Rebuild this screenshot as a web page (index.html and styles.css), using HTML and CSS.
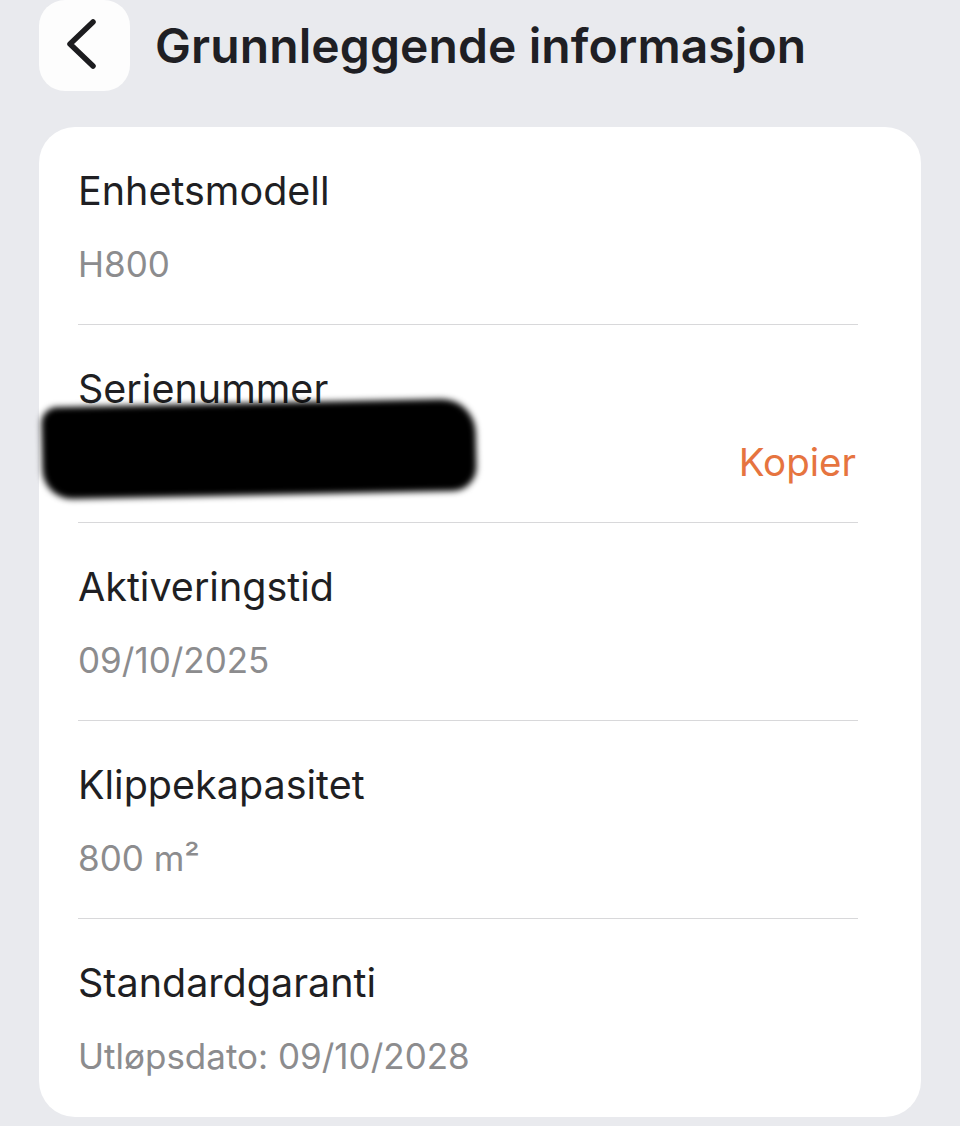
FILE: index.html
```html
<!DOCTYPE html>
<html lang="no">
<head>
  <meta charset="UTF-8">
  <title>Grunnleggende informasjon</title>
  <link rel="stylesheet" href="styles.css">
</head>
<body>
  <header class="topbar">
    <button class="back-btn" aria-label="Tilbake">
      <svg width="91" height="91" viewBox="0 0 91 91">
        <path d="M54 22 L31 44 L54 66" fill="none" stroke="#1c1c1f" stroke-width="5.5" stroke-linecap="round" stroke-linejoin="round"/>
      </svg>
    </button>
    <h1>Grunnleggende informasjon</h1>
  </header>

  <section class="card">
    <div class="row">
      <div class="label">Enhetsmodell</div>
      <div class="value">H800</div>
    </div>

    <div class="row">
      <div class="label">Serienummer</div>
      <div class="value-line">
        <span class="value">&nbsp;</span>
        <span class="copy">Kopier</span>
      </div>
      <!-- redacted serial number -->
      <div class="redact"></div>
    </div>

    <div class="row">
      <div class="label">Aktiveringstid</div>
      <div class="value">09/10/2025</div>
    </div>

    <div class="row">
      <div class="label">Klippekapasitet</div>
      <div class="value">800 m²</div>
    </div>

    <div class="row">
      <div class="label">Standardgaranti</div>
      <div class="value">Utløpsdato: 09/10/2028</div>
    </div>
  </section>
</body>
</html>
```

FILE: styles.css
```css
body {
  margin: 0;
  background: #e9eaee;
  font-family: Inter, "Noto Sans", sans-serif;
  color: #1f1f23;
  overflow: hidden;
}
.topbar {
  display: flex;
  align-items: center;
  gap: 25px;
  padding-left: 39px;
  height: 91px;
}
.back-btn {
  width: 91px;
  height: 91px;
  padding: 0;
  border: none;
  border-radius: 26px;
  background: #fdfdfd;
  flex-shrink: 0;
}
.back-btn svg {
  display: block;
}
h1 {
  margin: 0;
  font-size: 48px;
  font-weight: 600;
  letter-spacing: 0.1px;
  color: #1f1f24;
}
.card {
  margin: 36px 39px 0;
  padding: 0 63px 0 39px;
  background: #fff;
  border-radius: 36px;
}
.row {
  position: relative;
  box-sizing: border-box;
  height: 198px;
  padding-top: 40px;
  border-bottom: 1px solid #d8d8da;
}
.row:last-child {
  border-bottom: none;
}
.label {
  font-size: 39.5px;
  line-height: 48px;
  color: #1f1f23;
}
.value {
  margin-top: 27px;
  font-size: 35px;
  line-height: 44px;
  color: #8c8c8e;
}
.value-line {
  display: flex;
  justify-content: space-between;
  align-items: flex-end;
}
.copy {
  font-size: 38.5px;
  line-height: 44px;
  color: #e6743f;
  margin-right: 2px;
}
.redact {
  position: absolute;
  left: -36px;
  top: 78px;
  width: 434px;
  height: 92px;
  background: #000;
  border-radius: 16px 34px 24px 30px;
  transform: rotate(-1.2deg);
  filter: blur(3px);
}
```
